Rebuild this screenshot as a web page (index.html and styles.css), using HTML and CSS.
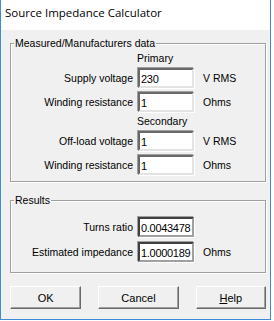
FILE: index.html
```html
<!DOCTYPE html>
<html>
<head>
    <meta charset="UTF-8" />
    <title>Source Impedance Calculator</title>
    <link rel="stylesheet" href="styles.css">
</head>
<body>
    <div class="window">
        <div class="titlebar">Source Impedance Calculator</div>
        <div class="client">
            <fieldset class="group data">
                <legend>Measured/Manufacturers data</legend>
                <div class="heading">Primary</div>
                <div class="row">
                    <label>Supply voltage</label>
                    <input type="text" value="230" />
                    <span class="unit">V RMS</span>
                </div>
                <div class="row">
                    <label>Winding resistance</label>
                    <input type="text" value="1" />
                    <span class="unit">Ohms</span>
                </div>
                <div class="heading">Secondary</div>
                <div class="row">
                    <label>Off-load voltage</label>
                    <input type="text" value="1" />
                    <span class="unit">V RMS</span>
                </div>
                <div class="row">
                    <label>Winding resistance</label>
                    <input type="text" value="1" />
                    <span class="unit">Ohms</span>
                </div>
            </fieldset>
            <fieldset class="group results">
                <legend>Results</legend>
                <div class="row">
                    <label>Turns ratio</label>
                    <input type="text" class="readonly" value="0.0043478" readonly />
                    <span class="unit"></span>
                </div>
                <div class="row">
                    <label>Estimated impedance</label>
                    <input type="text" class="readonly" value="1.0000189" readonly />
                    <span class="unit">Ohms</span>
                </div>
            </fieldset>
            <div class="buttons">
                <button type="button" class="btn ok">OK</button>
                <button type="button" class="btn cancel">Cancel</button>
                <button type="button" class="btn help"><u>H</u>elp</button>
            </div>
        </div>
    </div>
</body>
</html>
```

FILE: styles.css
```css
body {
    margin: 0;
    padding: 0;
    background: #fff;
    font-family: "Liberation Sans", Arial, sans-serif;
    font-size: 10.5px;
    color: #000;
}
.window {
    width: 269px;
    height: 319px;
    border-left: 1px solid #3d8ad6;
    border-right: 1px solid #3d8ad6;
    border-bottom: 1px solid #3d8ad6;
    background: #f0f0f0;
    display: flex;
    flex-direction: column;
}
.titlebar {
    height: 30px;
    background: #fff;
    font-family: "Open Sans", "Noto Sans", sans-serif;
    font-size: 11.5px;
    line-height: 26px;
    padding-left: 4px;
    box-sizing: border-box;
}
.client {
    padding: 7px 4px 0 9px;
}
.group {
    margin: 0;
    padding: 0 0 6px 0;
    border: 1px solid #a0a0a0;
    box-shadow: 1px 1px 0 #fff, inset 1px 1px 0 #fff;
}
.group legend {
    margin-left: 3px;
    padding: 0 1px;
    line-height: 13px;
    background: #f0f0f0;
}
.results {
    margin-top: 12px;
    padding-top: 6px;
    padding-bottom: 10px;
}
.heading {
    padding-left: 126px;
    line-height: 13px;
    height: 13px;
    margin-top: 3px;
}
.data .heading:first-of-type {
    margin-top: 2px;
}
.row {
    display: grid;
    grid-template-columns: 122px 56px 1fr;
    column-gap: 5px;
    align-items: center;
    height: 20px;
    margin-top: 4px;
}
.results .row + .row {
    margin-top: 5px;
}
.row label {
    text-align: right;
}
.row .unit {
    padding-left: 4px;
}
.data .heading + .row {
    margin-top: 3px;
}
input[type="text"] {
    width: 56px;
    height: 20px;
    box-sizing: border-box;
    margin: 0;
    padding: 1px 0 0 1px;
    font-family: "Liberation Sans", Arial, sans-serif;
    font-size: 11px;
    letter-spacing: -0.3px;
    background: #fff;
    border-style: solid;
    border-width: 2px;
    border-color: #696969 #e3e3e3 #e3e3e3 #696969;
    box-shadow: -1px -1px 0 #a0a0a0, 1px 1px 0 #fff;
    outline: none;
}
input.readonly {
    border-color: #404040 #a0a0a0 #a0a0a0 #404040;
}
.buttons {
    display: flex;
    margin-top: 13px;
    gap: 17px;
}
.btn {
    height: 23px;
    margin: 0;
    padding: 0;
    background: #f0f0f0;
    font-family: "Liberation Sans", Arial, sans-serif;
    font-size: 11px;
    color: #000;
    border-style: solid;
    border-width: 1px;
    border-color: #fff #696969 #696969 #fff;
    box-shadow: inset -1px -1px 0 #a0a0a0;
}
.ok {
    width: 74px;
}
.cancel {
    width: 83px;
}
.help {
    width: 73px;
}
```
